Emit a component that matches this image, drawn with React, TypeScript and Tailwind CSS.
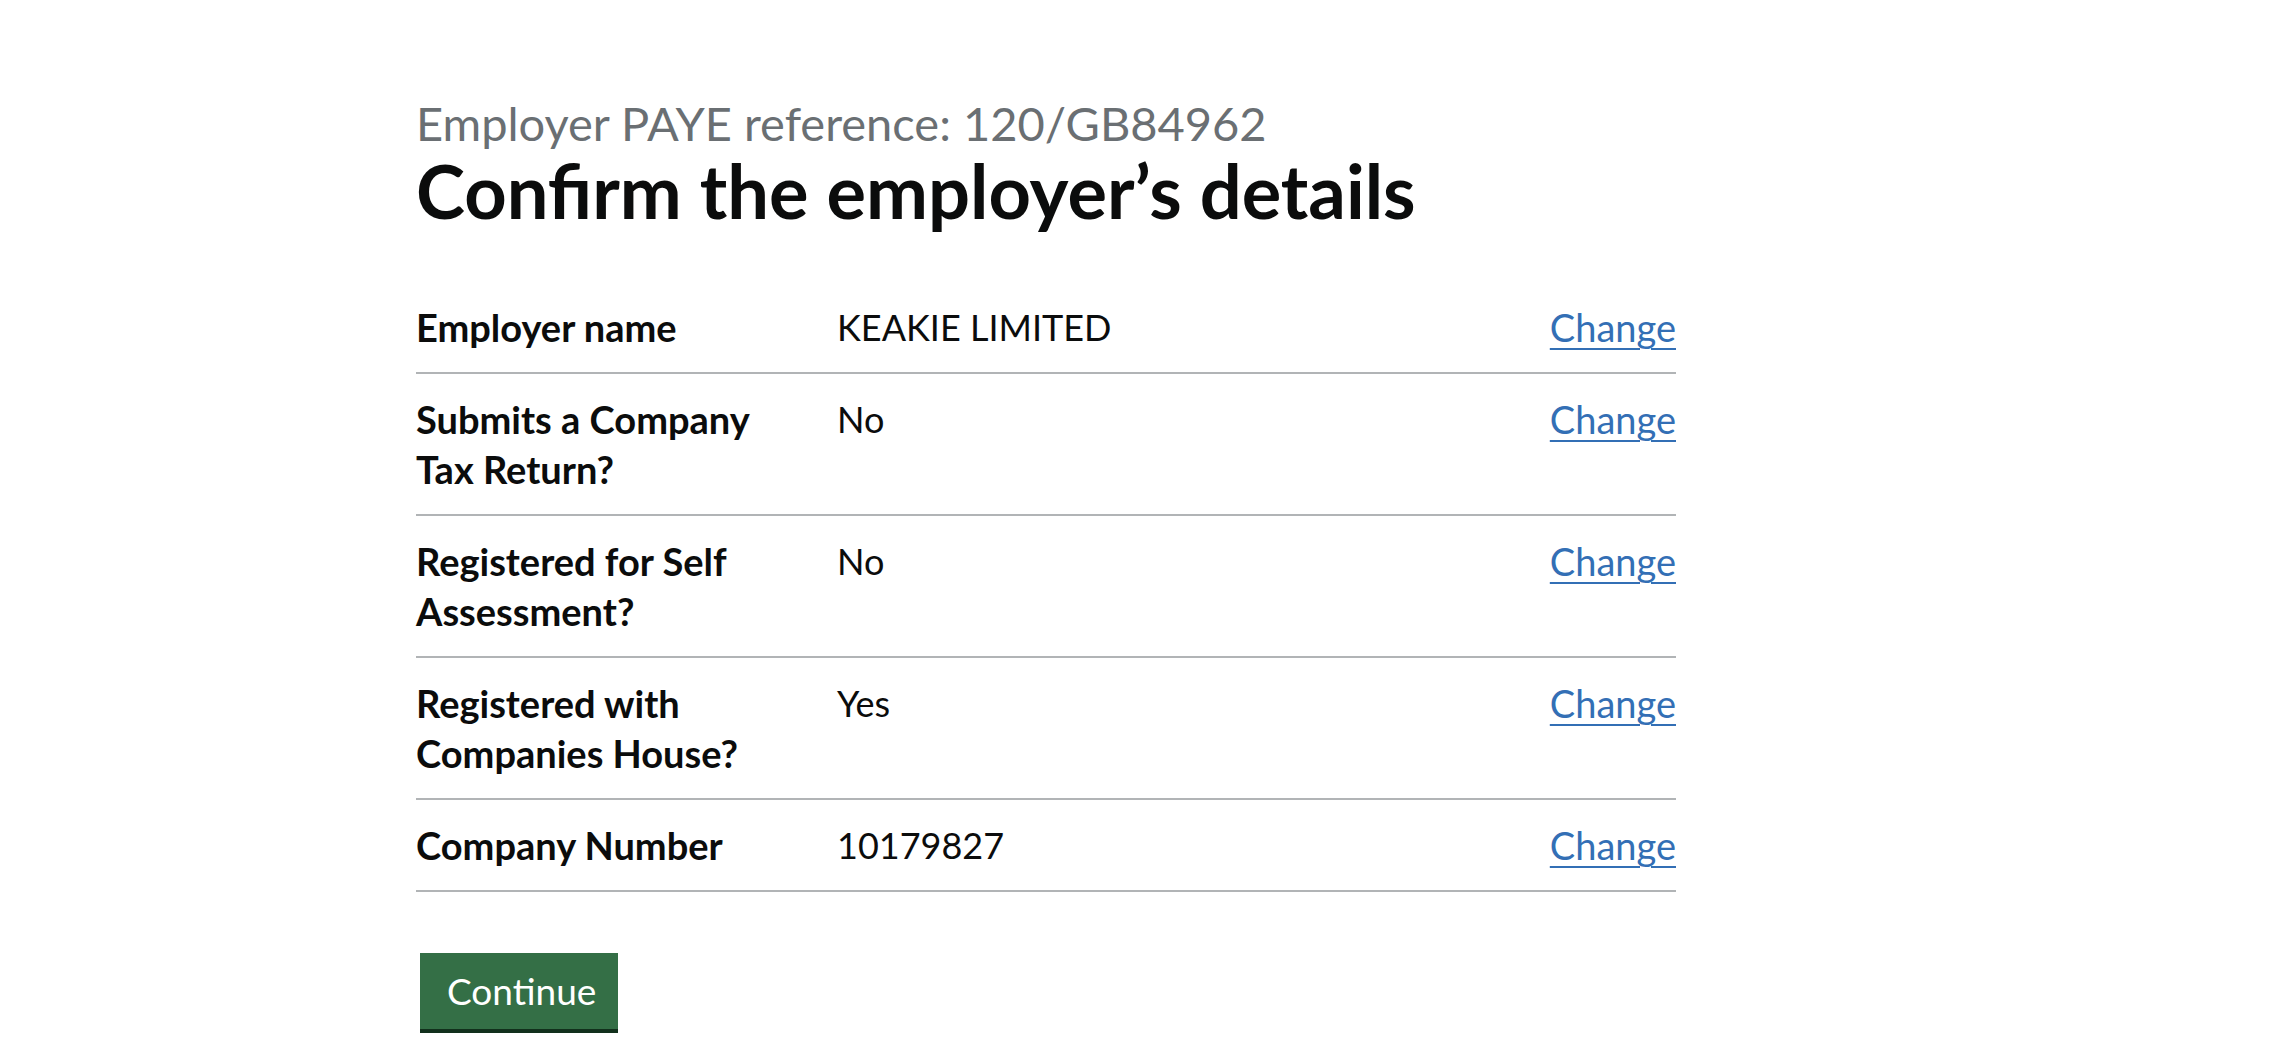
const rows = [
  { key: "Employer name", value: "KEAKIE LIMITED" },
  { key: "Submits a Company Tax Return?", value: "No" },
  { key: "Registered for Self Assessment?", value: "No" },
  { key: "Registered with Companies House?", value: "Yes" },
  { key: "Company Number", value: "10179827" },
]

const SummaryRow = ({ label, value }: { label: string; value: string }) => {
  return (
    <div className="flex border-b-2 border-[#b1b4b6]">
      <dt className="w-[421px] shrink-0 py-5 pr-10 text-[38px] font-bold">{label}</dt>
      <dd className="flex-1 py-5 text-[36px]">{value}</dd>
      <dd className="py-5 text-right text-[38px]">
        <a
          href="#"
          className="text-[#336fb5] underline decoration-2 underline-offset-[6px]"
        >
          Change
        </a>
      </dd>
    </div>
  )
}

export default function App() {
  return (
    <div className="min-h-screen bg-white text-[#0b0c0c] font-['Lato',sans-serif]">
      <main className="pl-[416px] pt-[96px] pb-10">
        <div className="w-[1260px]">
          <span className="block text-[47px] leading-[55px] text-[#6a6f73]">
            Employer PAYE reference: 120/GB84962
          </span>
          <h1 className="text-[74px] leading-[80px] font-bold">
            Confirm the employer’s details
          </h1>

          <dl className="mt-[51px] leading-[50px]">
            {rows.map((row) => (
              <SummaryRow key={row.key} label={row.key} value={row.value} />
            ))}
          </dl>

          <button className="ml-1 mt-[61px] flex h-[76px] w-[198px] items-center bg-[#346f46] pl-[27px] text-[37px] leading-[50px] text-white shadow-[0_4px_0_#12301c]">
            Continue
          </button>
        </div>
      </main>
    </div>
  )
}
